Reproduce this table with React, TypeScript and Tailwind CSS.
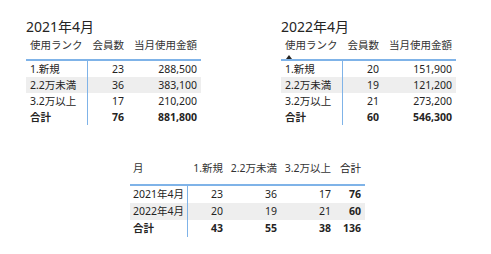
const FONT = "font-['Noto_Sans','Noto_Sans_CJK_JP',sans-serif]";

type Row = { label: string; count: number; amount: string; shade?: boolean; total?: boolean };

const t2021: Row[] = [
  { label: "1.新規", count: 23, amount: "288,500" },
  { label: "2.2万未満", count: 36, amount: "383,100", shade: true },
  { label: "3.2万以上", count: 17, amount: "210,200" },
  { label: "合計", count: 76, amount: "881,800", total: true },
];

const t2022: Row[] = [
  { label: "1.新規", count: 20, amount: "151,900" },
  { label: "2.2万未満", count: 19, amount: "121,200", shade: true },
  { label: "3.2万以上", count: 21, amount: "273,200" },
  { label: "合計", count: 60, amount: "546,300", total: true },
];

const cross = [
  { label: "2021年4月", vals: [23, 36, 17, 76] },
  { label: "2022年4月", vals: [20, 19, 21, 60], shade: true },
  { label: "合計", vals: [43, 55, 38, 136], total: true },
];

function RankTable({ title, rows, sorted }: { title: string; rows: Row[]; sorted?: boolean }) {
  return (
    <div className="w-[175px]">
      <div className="h-[18px] text-[14px] leading-[18px] text-[#252423]">{title}</div>
      <div className="grid h-[25px] grid-cols-[62px_40px_73px] border-b-2 border-[#7fb3e8] pt-[2px] text-[10.5px] leading-[14px] text-[#333]">
        <div className="pl-[4px]">
          <div>使用ランク</div>
          {sorted && (
            <div className="ml-[1px] mt-[3px] h-0 w-0 border-x-[3.5px] border-b-[4px] border-x-transparent border-b-[#252423]" />
          )}
        </div>
        <div className="pr-[4px] text-right">会員数</div>
        <div className="pr-[4px] text-right">当月使用金額</div>
      </div>
      {rows.map((r) => (
        <div
          key={r.label}
          className={`grid h-[16px] grid-cols-[62px_40px_73px] text-[10.5px] leading-[16px] text-[#252423] ${r.shade ? "bg-[#eeeeee]" : ""} ${r.total ? "font-bold" : ""}`}
        >
          <div className="border-r border-[#7fb3e8] pl-[4px]">{r.label}</div>
          <div className="pr-[4px] text-right">{r.count}</div>
          <div className="pr-[4px] text-right">{r.amount}</div>
        </div>
      ))}
    </div>
  );
}

function CrossTable() {
  const heads = ["1.新規", "2.2万未満", "3.2万以上", "合計"];
  return (
    <div className="w-[235px]">
      <div className="grid h-[25px] grid-cols-[58px_39px_54px_54px_30px] border-b-2 border-[#7fb3e8] text-[10.5px] leading-[14px] text-[#333]">
        <div className="pl-[3px]">月</div>
        {heads.map((h) => (
          <div key={h} className={`pr-[4px] text-right ${h === "合計" ? "text-[#252423]" : ""}`}>
            {h}
          </div>
        ))}
      </div>
      {cross.map((r) => (
        <div
          key={r.label}
          className={`grid h-[17px] grid-cols-[58px_39px_54px_54px_30px] text-[10.5px] leading-[17px] text-[#252423] ${r.shade ? "bg-[#eeeeee]" : ""}`}
        >
          <div className={`border-r border-[#7fb3e8] pl-[3px] ${r.total ? "font-bold" : ""}`}>{r.label}</div>
          {r.vals.map((v, i) => (
            <div key={i} className={`pr-[4px] text-right ${r.total || i === 3 ? "font-bold" : ""}`}>
              {v}
            </div>
          ))}
        </div>
      ))}
    </div>
  );
}

export default function App() {
  return (
    <div className={`h-[254px] w-[491px] bg-white ${FONT}`}>
      <div className="flex gap-[80px] pl-[26px] pt-[18px]">
        <RankTable title="2021年4月" rows={t2021} />
        <RankTable title="2022年4月" rows={t2022} sorted />
      </div>
      <div className="pl-[130px] pt-[36px]">
        <CrossTable />
      </div>
    </div>
  );
}
